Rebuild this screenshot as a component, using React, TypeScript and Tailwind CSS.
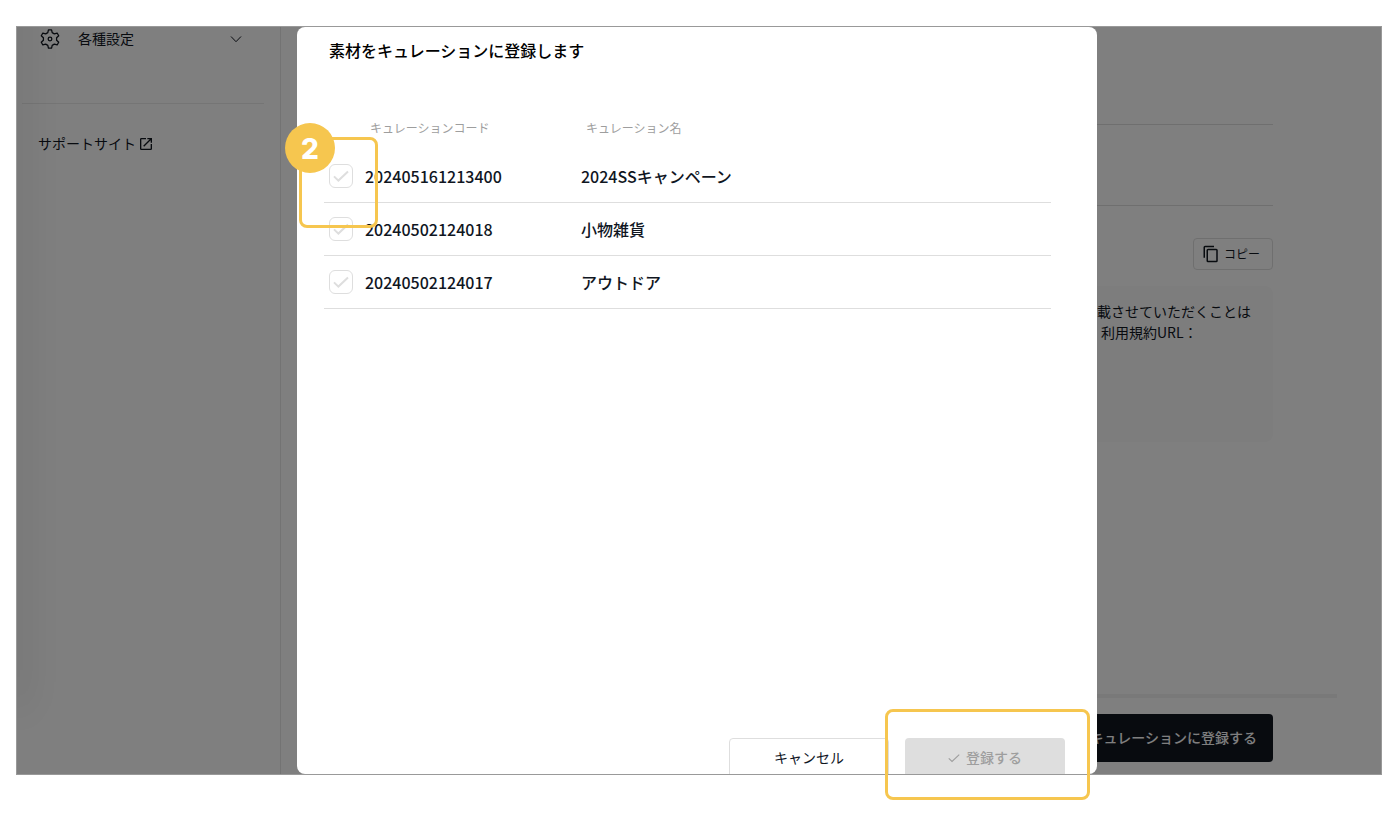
import { useState } from "react";

const CURATIONS = [
  { code: "202405161213400", name: "2024SSキャンペーン" },
  { code: "20240502124018", name: "小物雑貨" },
  { code: "20240502124017", name: "アウトドア" },
];

function CheckIcon({ className }: { className: string }) {
  return (
    <svg viewBox="0 0 16 16" fill="none" stroke="currentColor" className={className} aria-hidden="true">
      <path d="M1 8.4 5.4 12.6 15 3.6" />
    </svg>
  );
}

function GearIcon() {
  return (
    <svg viewBox="0 0 24 24" fill="none" stroke="currentColor" strokeWidth="1.4" strokeLinejoin="round" className="size-[22px]" aria-hidden="true">
      <path d="M10.300 2h3.400l.7 3.100 2.300 1.300 3.100-.9 1.700 2.900-2.300 2.300v2.600l2.300 2.300-1.700 2.900-3.100-.9-2.300 1.300-.7 3.100h-3.400l-.7-3.100-2.300-1.300-3.100.9-1.700-2.900 2.300-2.300v-2.600L2.500 8.400l1.700-2.900 3.100.9 2.300-1.300z" />
      <circle cx="12" cy="12" r="2" />
    </svg>
  );
}

function Sidebar() {
  return (
    <aside className="relative w-[264px] shrink-0 overflow-hidden border-r border-[#e6e6e6] text-sm text-[#10161f]">
      <div className="absolute -top-10 left-0 h-[720px] w-0 shadow-[0_0_40px_4px_rgba(0,0,0,0.25)]" />
      <button type="button" className="flex h-6 w-full items-center pr-[38px] pl-[22px]">
        <GearIcon />
        <span className="ml-[17px] pb-0.5">各種設定</span>
        <svg viewBox="0 0 12 12" fill="none" stroke="currentColor" className="ml-auto size-3" aria-hidden="true">
          <path d="M1 3.5 6 8.7 11 3.5" />
        </svg>
      </button>
      <hr className="mt-[52px] mr-4 ml-[5px] border-[#ebebeb]" />
      <a href="#support" className="mt-[30px] ml-[21px] flex h-5 items-center gap-0.5">
        <span className="pb-0.5">サポートサイト</span>
        <svg viewBox="0 0 24 24" fill="currentColor" className="size-4" aria-hidden="true">
          <path d="M19 19H5V5h7V3H5a2 2 0 0 0-2 2v14a2 2 0 0 0 2 2h14a2 2 0 0 0 2-2v-7h-2zM14 3v2h3.600l-9.800 9.800 1.400 1.400L19 6.400V10h2V3z" />
        </svg>
      </a>
    </aside>
  );
}

function MaterialPage() {
  return (
    <main className="flex min-w-0 flex-1 flex-col px-11 text-sm text-[#10161f]">
      <div className="flex flex-1 flex-col px-16">
        <hr className="mt-[97px] border-[#dedede]" />
        <hr className="mt-20 border-[#dedede]" />
        <button type="button" className="mt-8 flex h-8 items-center gap-1 self-end rounded border border-[#dedede] pr-3 pl-2">
          <svg viewBox="0 0 24 24" fill="currentColor" className="size-[18px]" aria-hidden="true">
            <path d="M16 1H4a2 2 0 0 0-2 2v14h2V3h12zM19 5H8a2 2 0 0 0-2 2v14a2 2 0 0 0 2 2h11a2 2 0 0 0 2-2V7a2 2 0 0 0-2-2zm0 16H8V7h11z" />
          </svg>
          <span className="text-xs">コピー</span>
        </button>
        <div className="mt-4 flex h-[156px] justify-end rounded-lg bg-[#fafafa] pt-[15px]">
          <p className="w-44 leading-[21px]">
            載させていただくことは
            <br />
            <span className="pl-1">利用規約URL：</span>
          </p>
        </div>
      </div>
      <hr className="border-t-4 border-[#f2f2f2]" />
      <div className="flex justify-end px-16 pt-4 pb-3">
        <button type="button" className="h-12 rounded bg-[#10161f] px-4 pb-0.5 font-medium text-white">
          キュレーションに登録する
        </button>
      </div>
    </main>
  );
}

function CurationRow({ code, name, marked }: { code: string; name: string; marked: boolean }) {
  const [checked, setChecked] = useState(false);

  return (
    <tr className="h-[53px]">
      <td className="border-b border-[#dedede] pl-[5px]">
        <label className="relative block size-6">
          <input
            type="checkbox"
            aria-label={code}
            checked={checked}
            onChange={(e) => setChecked(e.target.checked)}
            className="block size-6 appearance-none rounded-md border border-[#dedede] bg-white checked:border-[#10161f]"
          />
          <CheckIcon className="pointer-events-none absolute inset-1 size-4 stroke-2 text-[#dedede]" />
          {marked && (
            <span className="pointer-events-none absolute -top-[27px] -left-[30px] z-10 h-[91px] w-[79px] rounded-lg border-3 border-[#f6c64f]">
              <span className="absolute -top-[17px] -left-[17px] flex size-[50px] items-center justify-center rounded-full bg-[#f6c64f] pt-0.5 font-[Inter,sans-serif] text-[28px] font-extrabold text-white">
                2
              </span>
            </span>
          )}
        </label>
      </td>
      <td className="border-b border-[#dedede]">{code}</td>
      <td className="border-b border-[#dedede]">{name}</td>
    </tr>
  );
}

function CurationDialog() {
  return (
    <div role="dialog" aria-labelledby="dialog-title" className="flex w-[800px] flex-col rounded-lg bg-white">
      <h2 id="dialog-title" className="px-8 pt-[11px] text-base font-medium text-black">
        素材をキュレーションに登録します
      </h2>
      <div className="mt-11 min-h-[632px] pr-[46px] pl-[27px]">
        <table className="w-full table-fixed border-separate border-spacing-0 text-left font-medium text-[#10161f]">
          <colgroup>
            <col className="w-[41px]" />
            <col className="w-[216px]" />
            <col />
          </colgroup>
          <thead>
            <tr className="h-11 text-xs text-[#9e9e9e]">
              <td />
              <th scope="col" className="pl-[5px] font-normal">キュレーションコード</th>
              <th scope="col" className="pl-[5px] font-normal">キュレーション名</th>
            </tr>
          </thead>
          <tbody>
            {CURATIONS.map((c, i) => (
              <CurationRow key={c.code} code={c.code} name={c.name} marked={i === 0} />
            ))}
          </tbody>
        </table>
      </div>
      <div className="relative px-8">
        {/* Buttons run past the bottom edge of the frame */}
        <div className="flex h-9 justify-end gap-4 overflow-hidden text-sm">
          <button type="button" className="h-10 w-40 rounded border border-[#dedede] pb-0.5 text-[#10161f]">
            キャンセル
          </button>
          <button type="button" disabled className="flex h-10 w-40 items-center justify-center gap-1.5 rounded bg-[#dedede] font-medium text-[#9e9e9e]">
            <CheckIcon className="size-3 stroke-[1.500]" />
            <span className="pb-0.5">登録する</span>
          </button>
        </div>
        <div className="pointer-events-none absolute -top-[29px] right-[7px] z-10 h-[91px] w-[205px] rounded-lg border-3 border-[#f6c64f]" />
      </div>
    </div>
  );
}

export default function App() {
  return (
    <div className="bg-white px-4 pt-[26px] pb-[43px] font-['Noto_Sans_CJK_JP',sans-serif]">
      <div className="grid border border-[#999]">
        <div className="col-start-1 row-start-1 flex overflow-hidden">
          <Sidebar />
          <MaterialPage />
        </div>
        <div className="z-10 col-start-1 row-start-1 flex justify-center bg-black/50 pr-1">
          <CurationDialog />
        </div>
      </div>
    </div>
  );
}
